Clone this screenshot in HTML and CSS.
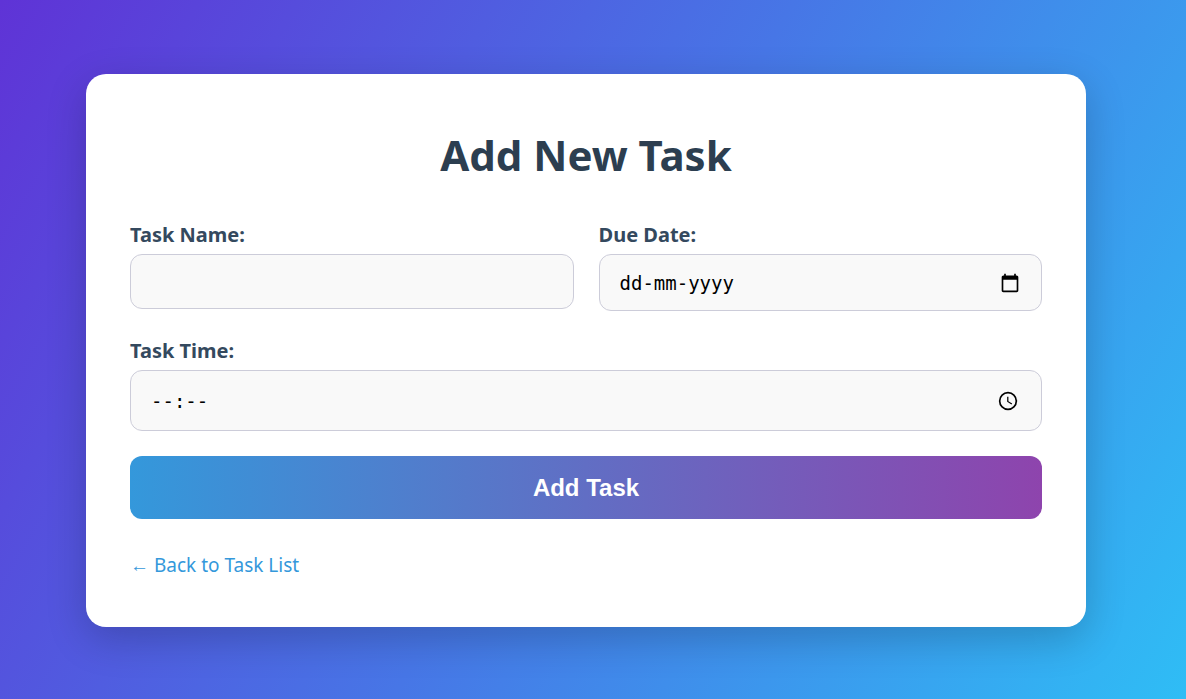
FILE: index.html
```html
<!DOCTYPE html>
<html lang="en">
<head>
<meta charset="UTF-8">
<meta name="viewport" content="width=device-width, initial-scale=1">
<title>Add New Task</title>
<link rel="stylesheet" href="styles.css">
</head>
<body class="page">
<main class="card">
  <h1 class="title">Add New Task</h1>
  <form class="form">
    <div class="field">
      <label class="label" for="name">Task Name:</label>
      <input class="input" id="name" type="text">
    </div>
    <div class="field">
      <label class="label" for="date">Due Date:</label>
      <div class="picker">
        <input class="input input-date" id="date" type="text" placeholder="dd-mm-yyyy">
        <svg class="icon" viewBox="0 0 24 24" aria-hidden="true"><path d="M20 3h-1V1h-2v2H7V1H5v2H4c-1.100 0-2 .9-2 2v16c0 1.100.9 2 2 2h16c1.100 0 2-.9 2-2V5c0-1.100-.9-2-2-2zm0 18H4V8h16v13z"/></svg>
      </div>
    </div>
    <div class="field field-wide">
      <label class="label" for="time">Task Time:</label>
      <div class="picker">
        <input class="input input-time" id="time" type="text" placeholder="--:--">
        <svg class="icon icon-time" viewBox="0 0 24 24" aria-hidden="true"><path d="M12 1a11 11 0 1 0 0 22 11 11 0 0 0 0-22zm0 20a9 9 0 1 1 0-18 9 9 0 0 1 0 18zM12.500 7H11v6l5.200 3.200.8-1.300-4.500-2.700V7z"/></svg>
      </div>
    </div>
    <button class="submit" type="submit">Add Task</button>
  </form>
  <a class="back" href="#">← Back to Task List</a>
</main>
</body>
</html>
```
FILE: styles.css
```css
* { box-sizing: border-box; }
.page {
  margin: 0;
  min-height: 100vh;
  display: flex;
  align-items: center;
  justify-content: center;
  padding: 22px 100px 20px 86px;
  background: linear-gradient(120deg, #5f33d6, #4776e6 50%, #2fbdf5);
  font-family: "Segoe UI", "Noto Sans", sans-serif;
}
.card {
  width: 100%;
  max-width: 1000px;
  padding: 44px 44px 46px;
  border-radius: 20px;
  background: #fff;
  box-shadow: 0 12px 40px rgba(0, 0, 0, 0.2);
}
.title {
  margin: 7px 0 35px;
  font-size: 42px;
  line-height: 60px;
  text-align: center;
  color: #2c3e50;
}
.form {
  display: grid;
  grid-template-columns: 1fr 1fr;
  gap: 25px;
  align-items: start;
}
.field-wide, .submit { grid-column: 1 / -1; }
.label {
  display: block;
  margin-bottom: 4px;
  font-size: 20px;
  line-height: 30px;
  font-weight: 700;
  color: #34495e;
}
.input {
  display: block;
  width: 100%;
  height: 55px;
  padding: 0 20px;
  border: 1px solid #ccccd9;
  border-radius: 12px;
  background: #f9f9f9;
  color: #000;
  font: 19px "DejaVu Sans Mono", monospace;
}
.input::placeholder { color: #000; opacity: 1; }
.input-date { height: 57px; }
.input-time { height: 61px; }
.picker { position: relative; }
.icon {
  position: absolute;
  top: 0;
  bottom: 0;
  right: 22px;
  width: 20px;
  margin: auto 0;
  height: 20px;
}
.icon-time { right: 24px; }
.submit {
  height: 63px;
  border: 0;
  border-radius: 12px;
  background: linear-gradient(90deg, #3498db, #8e44ad);
  color: #fff;
  font: bold 24px "Liberation Sans", Arial, sans-serif;
}
.back {
  display: block;
  width: fit-content;
  margin-top: 30px;
  font-size: 19px;
  line-height: 32px;
  color: #3498db;
  text-decoration: none;
}
```
